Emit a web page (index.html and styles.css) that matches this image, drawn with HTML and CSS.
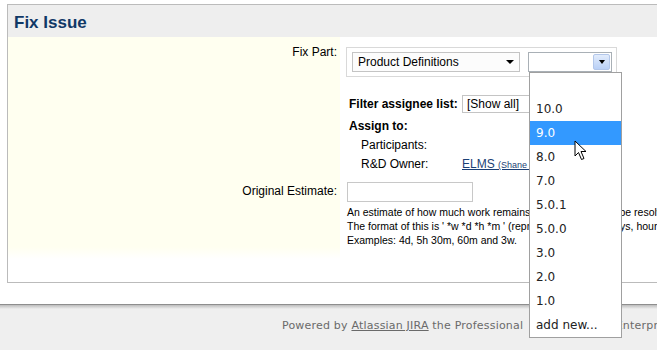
FILE: index.html
```html
<!DOCTYPE html>
<html lang="en">
<head>
    <meta charset="UTF-8">
    <title>Fix Issue</title>
    <link rel="stylesheet" href="styles.css">
</head>
<body>
    <div class="panel">
        <h2 class="panel-title">Fix Issue</h2>
        <div class="form">
            <div class="label label-fix">Fix Part:</div>
            <div class="field field-fix">
                <div class="fixbox">
                    <div class="select select-wide"><span>Product Definitions</span><i class="caret"></i></div>
                    <div class="select select-version">
                        <span></span>
                        <i class="xp-btn"><i class="caret"></i></i>
                        <ul class="options">
                            <li>&nbsp;</li>
                            <li>10.0</li>
                            <li class="selected">9.0</li>
                            <li>8.0</li>
                            <li>7.0</li>
                            <li>5.0.1</li>
                            <li>5.0.0</li>
                            <li>3.0</li>
                            <li>2.0</li>
                            <li>1.0</li>
                            <li>add new...</li>
                            <svg class="cursor" width="14" height="21" viewBox="0 0 14 21">
                                <path d="M1 1 L1 16 L4.5 12.5 L7.5 19.5 L10 18.5 L7 11.5 L12 11.5 Z" fill="#fff" stroke="#000" stroke-width="1" stroke-linejoin="miter"/>
                            </svg>
                        </ul>
                    </div>
                </div>
                <div class="filter-row">
                    <b class="filter-label">Filter assignee list:</b>
                    <div class="select select-filter">[Show all]</div>
                </div>
                <div class="assign">
                    <b>Assign to:</b>
                    <div class="assign-row"><span class="assign-key">Participants:</span></div>
                    <div class="assign-row"><span class="assign-key">R&amp;D Owner:</span><a href="#">ELMS <small>(Shane Elms)</small></a></div>
                </div>
            </div>

            <div class="label label-estimate">Original Estimate:</div>
            <div class="field field-estimate">
                <div class="text-input"></div>
                <div class="help">
                    An estimate of how much work remains until this issue will be resolved.<br>
                    The format of this is ' *w *d *h *m ' (representing weeks, days, hours and minutes - where * can be any number)<br>
                    Examples: 4d, 5h 30m, 60m and 3w.
                </div>
            </div>

            <div class="label label-end"></div>
            <div class="field field-end"></div>
        </div>
    </div>
    <div class="footer">
        Powered by <a href="#">Atlassian JIRA</a> the Professional&nbsp; <a href="#">Issue Tracker</a>. (Enterprise Edition, Version: 3.13.2-#335)
    </div>
</body>
</html>
```

FILE: styles.css
```css
body {
    margin: 0;
    background-color: #ffffff;
    color: #000000;
    font-family: "Liberation Sans", Arial, sans-serif;
    font-size: 12px;
    overflow: hidden;
}
.panel {
    margin: 4px -4px 0 7px;
    border: 1px solid #bbbbbb;
    height: 277px;
}
.panel-title {
    margin: 0;
    height: 32px;
    line-height: 35px;
    padding-left: 6px;
    background-color: #eeeeee;
    color: #103866;
    font-size: 17px;
    font-weight: bold;
}
.form {
    display: grid;
    grid-template-columns: 332px 1fr;
}
.label {
    background-color: #fffff0;
    text-align: right;
    padding-right: 3px;
    line-height: 14px;
}
.label-fix {
    padding-top: 8px;
}
.field-fix {
    padding: 10px 0 3px 6px;
    height: 125px;
}
.fixbox {
    display: inline-flex;
    gap: 8px;
    border: 1px solid #d9d9d9;
    padding: 4px 4px 4px 5px;
}
.select {
    position: relative;
    box-sizing: border-box;
    height: 20px;
    border: 1px solid #c4c4c4;
    background-color: #ffffff;
    display: flex;
    align-items: center;
    padding-left: 5px;
}
.select-wide {
    width: 168px;
    justify-content: space-between;
    padding-right: 5px;
    background-color: #fcfcfc;
}
.caret {
    width: 0;
    height: 0;
    border-left: 4px solid transparent;
    border-right: 4px solid transparent;
    border-top: 4px solid #000000;
}
.select-version {
    width: 84px;
    border-color: #a9b0b6;
    justify-content: flex-end;
    padding: 0 1px 0 0;
}
.xp-btn {
    box-sizing: border-box;
    width: 17px;
    height: 16px;
    border: 1px solid #b3c7ea;
    border-radius: 2px;
    background: linear-gradient(#e2ecfc, #b9d0f6);
    display: flex;
    align-items: center;
    justify-content: center;
}
.xp-btn .caret {
    border-left-width: 3.5px;
    border-right-width: 3.5px;
    border-top-width: 4px;
}
.options {
    position: absolute;
    left: 0;
    top: 19px;
    width: 91px;
    margin: 0;
    padding: 0;
    list-style: none;
    background-color: #ffffff;
    border: 1px solid #a0a0a0;
    font-family: "DejaVu Sans", Verdana, sans-serif;
    font-size: 12px;
    color: #222222;
    z-index: 5;
}
.options li {
    height: 24px;
    line-height: 24px;
    padding-left: 6px;
}
.options li.selected {
    background-color: #3399ff;
    color: #ffffff;
}
.cursor {
    position: absolute;
    left: 44px;
    top: 67px;
}
.filter-row {
    display: flex;
    align-items: center;
    margin-top: 18px;
    padding-left: 3px;
}
.filter-label {
    width: 113px;
}
.select-filter {
    width: 90px;
    height: 18px;
    border-color: #c4c4c4;
    padding-left: 4px;
}
.assign {
    margin-top: 4px;
    padding-left: 3px;
    line-height: 19px;
}
.assign b {
    display: block;
}
.assign-row {
    display: flex;
    padding-left: 12px;
    white-space: nowrap;
}
.assign-key {
    width: 101px;
}
.assign-row a {
    color: #1b3f75;
}
.assign-row small {
    font-size: 9px;
}
.label-estimate {
    padding-top: 9px;
}
.field-estimate {
    padding: 7px 0 0 7px;
    overflow: hidden;
}
.text-input {
    width: 126px;
    height: 20px;
    box-sizing: border-box;
    border: 1px solid #c8c8c8;
    background-color: #ffffff;
}
.help {
    margin-top: 3px;
    font-size: 10.5px;
    line-height: 14px;
    white-space: nowrap;
}
.label-end {
    height: 35px;
    background: linear-gradient(#fffff0, #ffffff 12px);
}
.footer {
    margin-top: 21px;
    height: 47px;
    border-top: 1px solid #8e8e8e;
    background: linear-gradient(#bdbdbd, #efefef 4px);
    background-color: #efefef;
    color: #6a6a6a;
    font-family: "DejaVu Sans", Verdana, sans-serif;
    font-size: 11px;
    letter-spacing: 0.2px;
    line-height: 42px;
    padding-left: 282px;
    white-space: nowrap;
}
.footer a {
    color: #6a6a6a;
}
```
